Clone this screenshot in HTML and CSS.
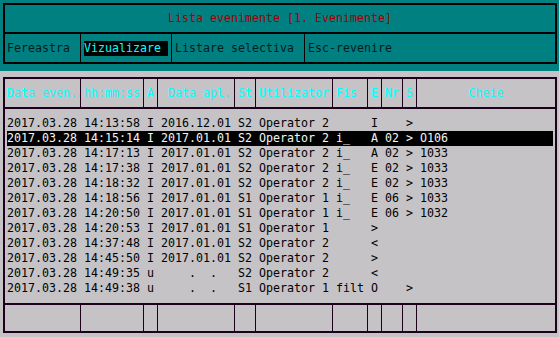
FILE: index.html
```html
<!DOCTYPE html>
<html>
<head>
  <meta charset="utf-8">
  <link rel="stylesheet" href="styles.css">
</head>
<body>
  <div class="top">
    <div class="frame">
      <div class="title">Lista evenimente [1. Evenimente]</div>
      <div class="menu">
        <div class="item">Fereastra</div>
        <div class="item"><span class="active">Vizualizare </span></div>
        <div class="item">Listare selectiva</div>
        <div class="item">Esc-revenire</div>
      </div>
    </div>
  </div>

  <div class="table">
    <div class="cols head">
      <div class="first">Data even.</div>
      <div>hh:mm:ss</div>
      <div>A</div>
      <div> Data apl.</div>
      <div>St</div>
      <div>Utilizator</div>
      <div>Fis</div>
      <div>E</div>
      <div>Nr</div>
      <div>S</div>
      <div class="center">Cheie</div>
    </div>

    <div class="rows">
      <div class="row">2017.03.28 14:13:58 I 2016.12.01 S2 Operator 2      I    ></div>
      <div class="row selected">2017.03.28 14:15:14 I 2017.01.01 S2 Operator 2 i_   A 02 > O106</div>
      <div class="row">2017.03.28 14:17:13 I 2017.01.01 S2 Operator 2 i_   A 02 > 1033</div>
      <div class="row">2017.03.28 14:17:38 I 2017.01.01 S2 Operator 2 i_   E 02 > 1033</div>
      <div class="row">2017.03.28 14:18:32 I 2017.01.01 S2 Operator 2 i_   E 02 > 1033</div>
      <div class="row">2017.03.28 14:18:56 I 2017.01.01 S1 Operator 1 i_   E 06 > 1033</div>
      <div class="row">2017.03.28 14:20:50 I 2017.01.01 S1 Operator 1 i_   E 06 > 1032</div>
      <div class="row">2017.03.28 14:20:53 I 2017.01.01 S1 Operator 1      ></div>
      <div class="row">2017.03.28 14:37:48 I 2017.01.01 S2 Operator 2      &lt;</div>
      <div class="row">2017.03.28 14:45:50 I 2017.01.01 S2 Operator 2      ></div>
      <div class="row">2017.03.28 14:49:35 u     .  .   S2 Operator 2      &lt;</div>
      <div class="row">2017.03.28 14:49:38 u     .  .   S1 Operator 1 filt O    ></div>
    </div>

    <div class="cols foot">
      <div></div><div></div><div></div><div></div><div></div><div></div>
      <div></div><div></div><div></div><div></div><div></div>
    </div>
  </div>
</body>
</html>
```

FILE: styles.css
```css
body {
  margin: 0;
  background: #c6c3c6;
  font-family: "DejaVu Sans Mono", "Liberation Mono", monospace;
  font-size: 11.63px;
  color: #000;
  height: 337px;
  overflow: hidden;
}

.top {
  background: #008080;
  padding: 3px 2px 7px 3px;
}
.frame {
  border: 2px solid #000;
  width: 550px;
}
.title {
  height: 27px;
  line-height: 27px;
  text-align: center;
  color: #a00000;
  border-bottom: 2px solid #000;
}
.menu {
  display: grid;
  grid-template-columns: 75px 90px 132px 1fr;
  gap: 1px;
  background: #000;
  height: 28px;
  color: #001c1c;
}
.menu .item {
  background: #008080;
  padding-left: 3px;
  display: flex;
  align-items: center;
}
.menu .item:first-child {
  padding-left: 2px;
}
.active {
  background: #000;
  color: #00ffff;
  white-space: pre;
  line-height: 15px;
}

.table {
  margin: 6px 2px 0 3px;
  border: 2px solid #1c001c;
  width: 550px;
}
.cols {
  display: grid;
  grid-template-columns: 75px 62px 13px 76px 20px 76px 34px 13px 20px 13px 1fr;
  gap: 1px;
  background: #1c001c;
}
.cols > div {
  background: #c6c3c6;
  padding-left: 3px;
  white-space: pre;
  display: flex;
  align-items: center;
}
.cols > .first {
  padding-left: 2px;
}
.cols > .center {
  justify-content: center;
  padding-left: 0;
}
.head {
  height: 28px;
  color: #00ffff;
  border-bottom: 2px solid #1c001c;
}
.foot {
  height: 26px;
  border-top: 2px solid #1c001c;
}

.rows {
  padding: 7px 0;
}
.row {
  height: 15px;
  line-height: 15px;
  white-space: pre;
  margin-left: 2px;
  width: 546px;
}
.row.selected {
  background: #000;
  color: #f4f4f4;
}
```
